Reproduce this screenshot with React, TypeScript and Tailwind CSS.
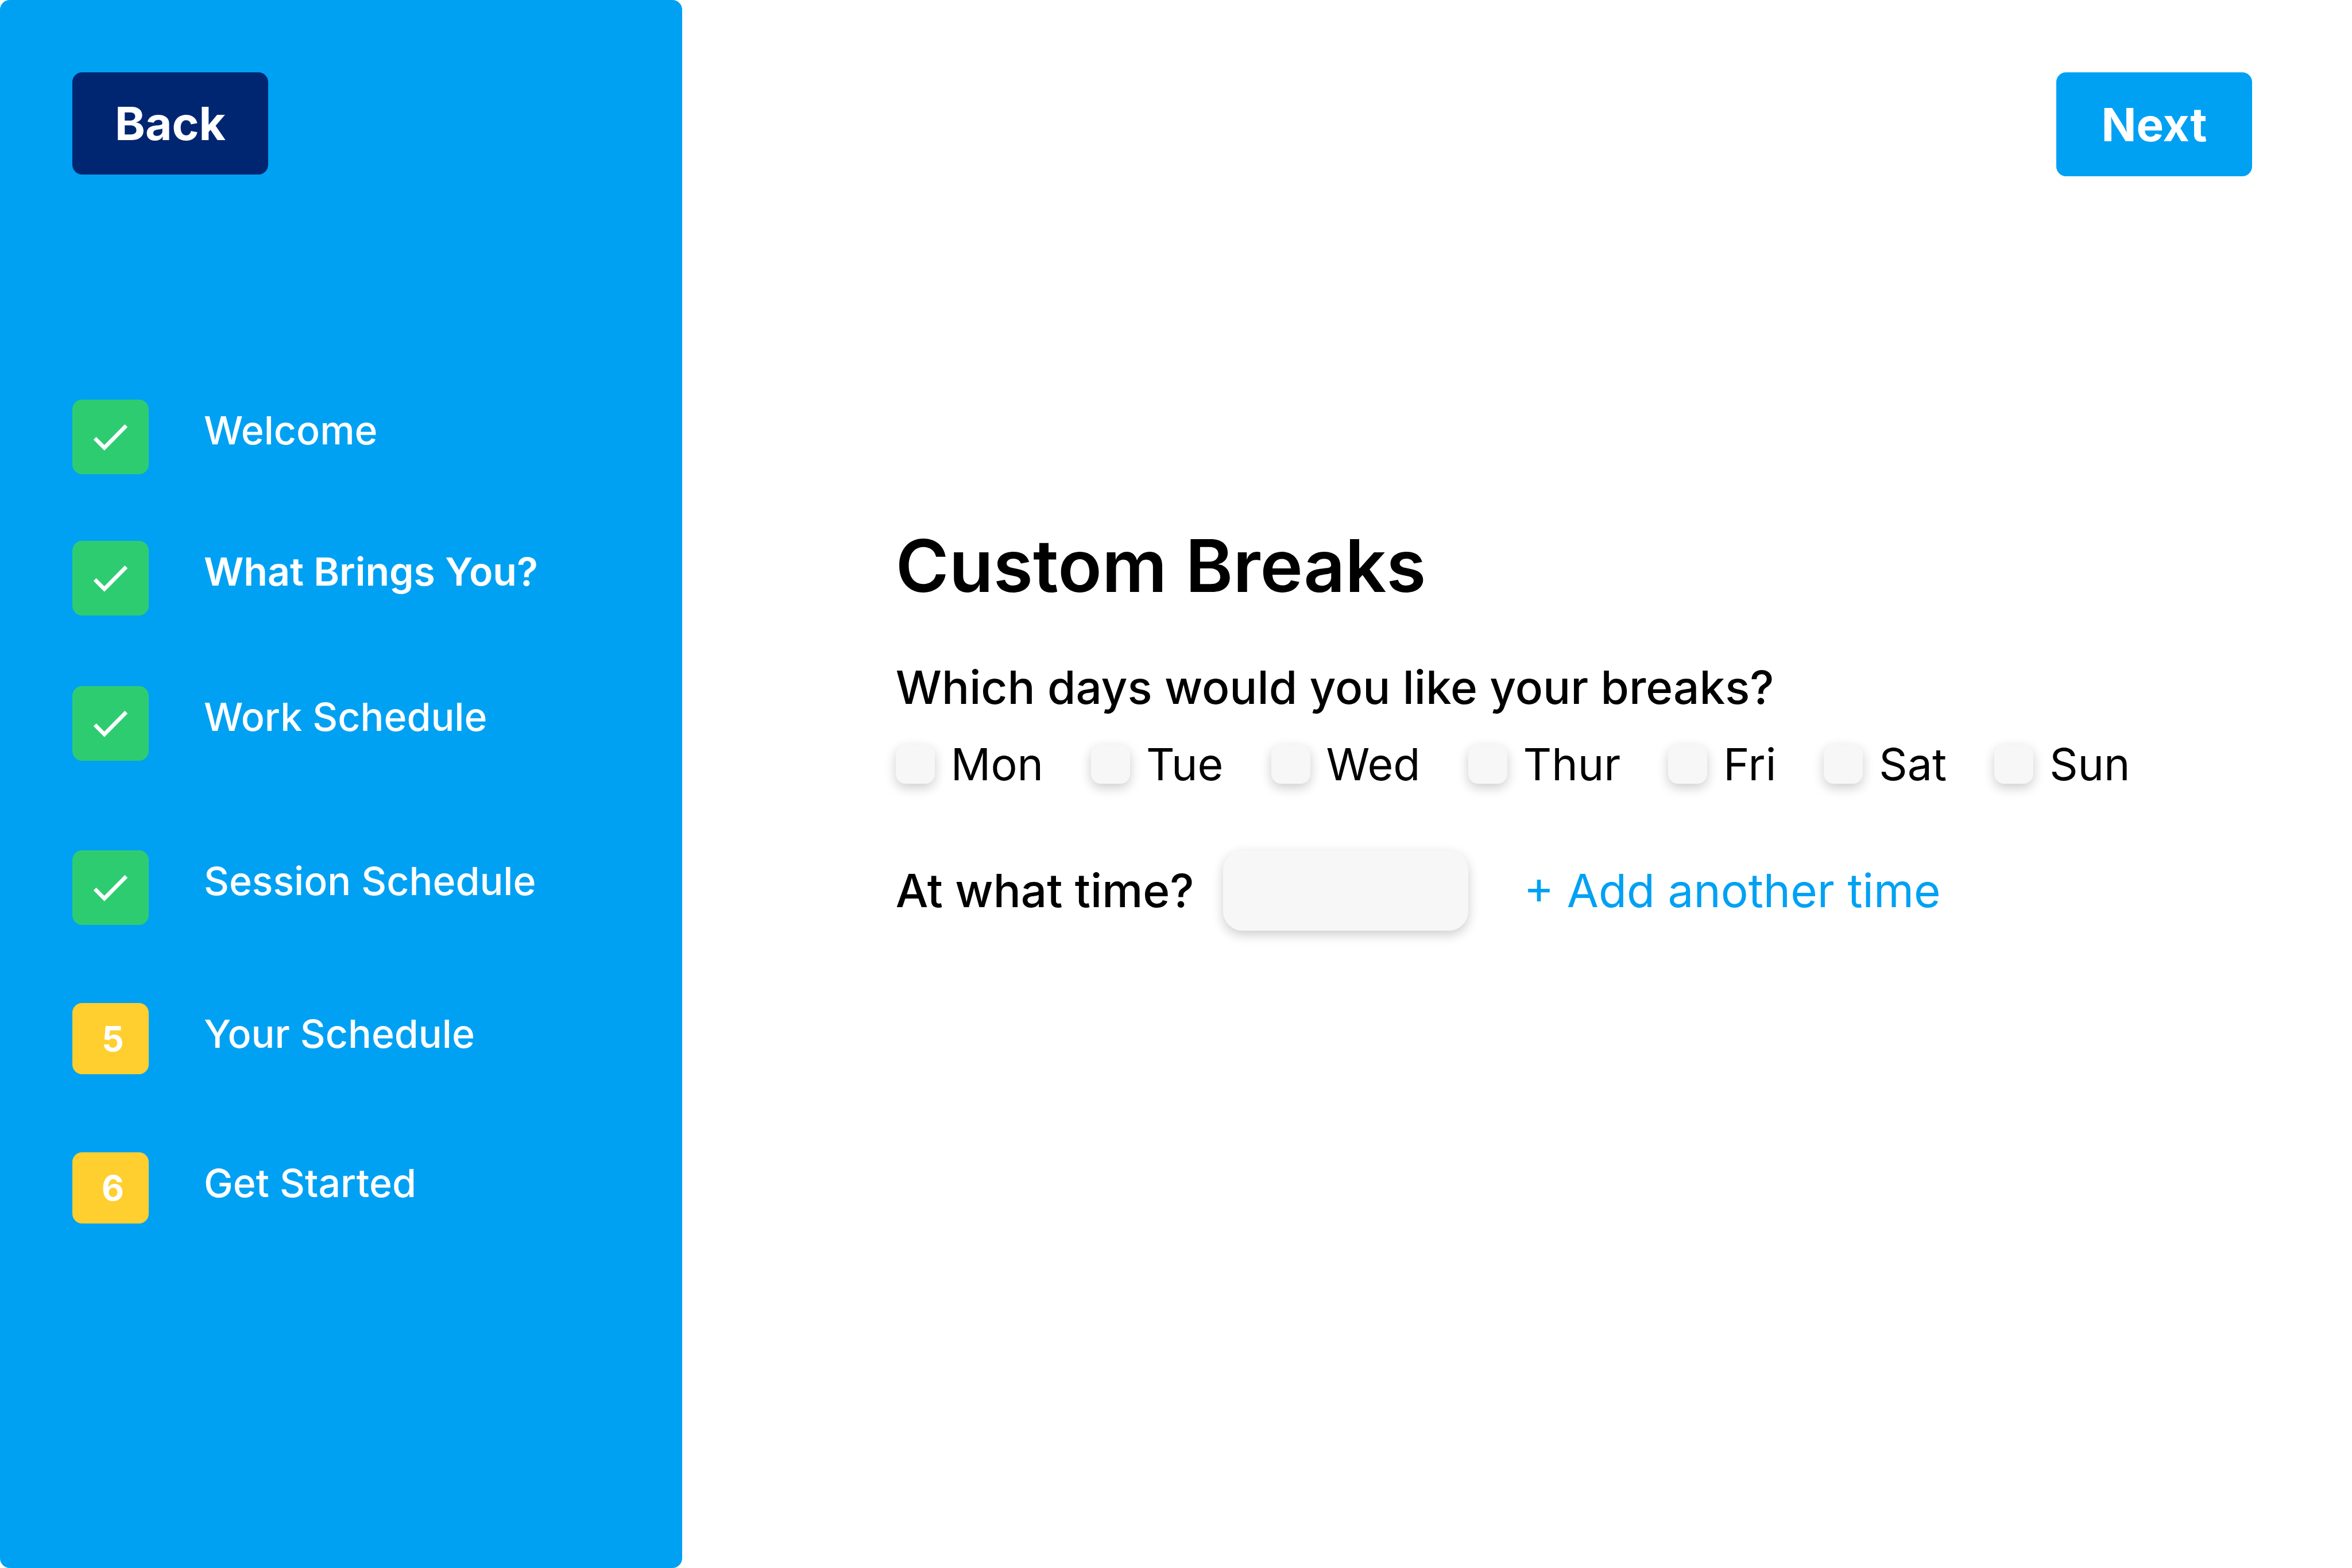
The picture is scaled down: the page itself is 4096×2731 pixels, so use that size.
type Step = { label: string; done: boolean; spacing: string; weight: string };

const steps: Step[] = [
  { label: "Welcome", done: true, spacing: "mt-[392px]", weight: "font-medium" },
  { label: "What Brings You?", done: true, spacing: "mt-[116px]", weight: "font-semibold" },
  { label: "Work Schedule", done: true, spacing: "mt-[123px]", weight: "font-medium" },
  { label: "Session Schedule", done: true, spacing: "mt-[156px]", weight: "font-medium" },
  { label: "Your Schedule", done: false, spacing: "mt-[136px]", weight: "font-medium" },
  { label: "Get Started", done: false, spacing: "mt-[136px]", weight: "font-medium" },
];

const days = ["Mon", "Tue", "Wed", "Thur", "Fri", "Sat", "Sun"];

function CheckBadge() {
  return (
    <span className="h-[130px] w-[133px] shrink-0 rounded-[17px] bg-[#2ecc71]">
      <svg viewBox="0 0 156 152" className="h-full w-full" fill="none" role="img" aria-label="Completed">
        <path d="M46 78.8 65.4 98.2 110 53" stroke="#fff" strokeWidth="8" />
      </svg>
    </span>
  );
}

function NumberBadge({ value }: { value: number }) {
  return (
    <span className="flex h-[124px] w-[133px] shrink-0 items-center justify-center rounded-[17px] bg-[#fecf2f] pl-2 text-[60px] leading-none font-bold">
      {value}
    </span>
  );
}

function Sidebar() {
  return (
    <aside className="flex w-[29%] shrink-0 flex-col items-start rounded-[17px] bg-[#00a1f3] px-[126px] py-[126px] text-white">
      <button
        type="button"
        className="h-[178px] w-[341px] rounded-[17px] bg-[#002672] text-[80px] leading-none font-bold"
      >
        Back
      </button>
      <ol>
        {steps.map((step, i) => (
          <li key={step.label} className={`flex items-start gap-24 ${step.spacing}`}>
            {step.done ? <CheckBadge /> : <NumberBadge value={i + 1} />}
            <span className={`text-[68px] leading-[106px] whitespace-nowrap ${step.weight}`}>{step.label}</span>
          </li>
        ))}
      </ol>
    </aside>
  );
}

function DayOption({ day }: { day: string }) {
  return (
    <label className="flex items-center gap-7 text-[77px] leading-[96px]">
      <input
        type="checkbox"
        name="days"
        value={day}
        className="size-[68px] shrink-0 appearance-none rounded-[17px] bg-[#f7f7f7] shadow-[0_7px_20px_rgba(0,0,0,0.2)] checked:bg-[#00a1f3]"
      />
      {day}
    </label>
  );
}

export default function App() {
  return (
    <div className="flex min-h-screen bg-white font-['Inter',sans-serif] text-black">
      <Sidebar />
      <main className="flex min-w-0 flex-1 flex-col pt-[126px] pr-[174px] pl-[372px]">
        <button
          type="button"
          className="h-[181px] w-[341px] self-end rounded-[17px] bg-[#00a1f3] text-[80px] leading-none font-bold text-white"
        >
          Next
        </button>
        <h1 className="mt-[598px] text-[126px] leading-[160px] font-semibold">Custom Breaks</h1>
        <fieldset className="mt-[84px]">
          <legend className="text-[80px] leading-[96px] font-medium">Which days would you like your breaks?</legend>
          <div className="mt-[38px] flex flex-wrap gap-x-[83px] gap-y-10">
            {days.map((day) => (
              <DayOption key={day} day={day} />
            ))}
          </div>
        </fieldset>
        <div className="mt-[102px] flex flex-wrap items-center text-[80px] leading-[96px]">
          <label htmlFor="break-time" className="font-medium">
            At what time?
          </label>
          <input
            id="break-time"
            type="text"
            className="ml-[51px] h-[140px] w-[427px] rounded-[34px] bg-[#f7f7f7] px-10 shadow-[0_7px_20px_rgba(0,0,0,0.2)] outline-none"
          />
          <button type="button" className="ml-24 text-[#00a1f3]">
            + Add another time
          </button>
        </div>
      </main>
    </div>
  );
}
